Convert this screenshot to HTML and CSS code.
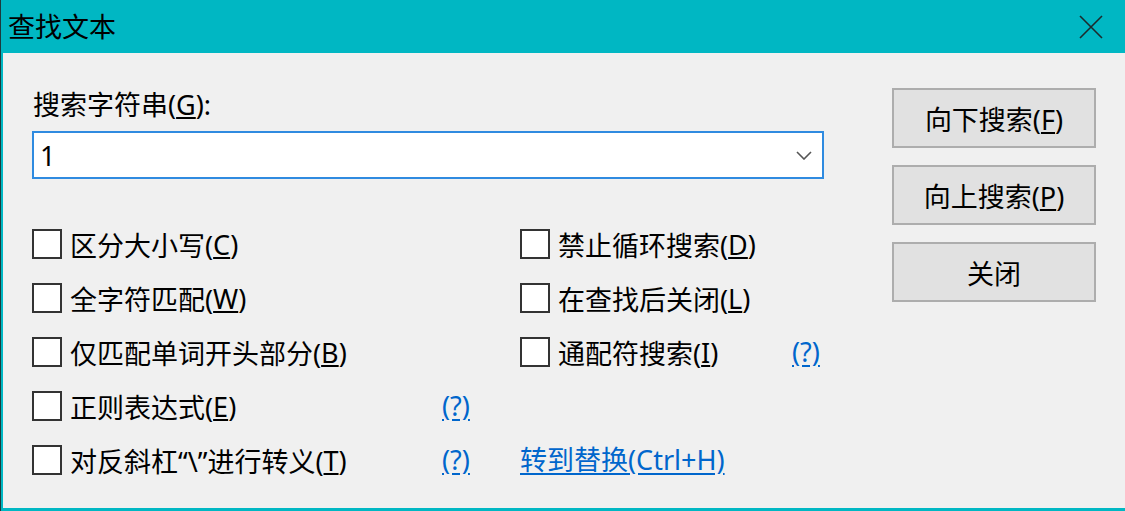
FILE: index.html
```html
<!DOCTYPE html>
<html lang="zh-CN">
<head>
  <meta charset="UTF-8" />
  <title>查找文本</title>
  <link rel="stylesheet" href="styles.css">
</head>
<body>
  <div class="window">
    <div class="titlebar">
      <span class="title">查找文本</span>
      <button class="close" aria-label="关闭">
        <svg width="24" height="24" viewBox="0 0 24 24"><path d="M1 1L23 23M23 1L1 23" stroke="#1c2a2c" stroke-width="1.6" fill="none"/></svg>
      </button>
    </div>

    <div class="content">
      <div class="main">
        <label class="field-label" for="pattern">搜索字符串(<u>G</u>):</label>
        <div class="combo">
          <input id="pattern" value="1" autocomplete="off" />
          <svg class="chev" width="16" height="9" viewBox="0 0 16 9"><path d="M1 1L8 8L15 1" stroke="#555" stroke-width="1.6" fill="none"/></svg>
        </div>

        <div class="options">
          <label class="opt c1"><span class="box"></span>区分大小写(<u>C</u>)</label>
          <label class="opt c3"><span class="box"></span>禁止循环搜索(<u>D</u>)</label>

          <label class="opt c1"><span class="box"></span>全字符匹配(<u>W</u>)</label>
          <label class="opt c3"><span class="box"></span>在查找后关闭(<u>L</u>)</label>

          <label class="opt c1"><span class="box"></span>仅匹配单词开头部分(<u>B</u>)</label>
          <label class="opt c3"><span class="box"></span>通配符搜索(<u>I</u>)</label>
          <a class="link c4" href="#">(?)</a>

          <label class="opt c1"><span class="box"></span>正则表达式(<u>E</u>)</label>
          <a class="link c2" href="#">(?)</a>

          <label class="opt c1"><span class="box"></span>对反斜杠“\”进行转义(<u>T</u>)</label>
          <a class="link c2" href="#">(?)</a>
          <a class="link c34" href="#">转到替换(Ctrl+H)</a>
        </div>
      </div>

      <div class="actions">
        <button class="btn">向下搜索(<u>F</u>)</button>
        <button class="btn">向上搜索(<u>P</u>)</button>
        <button class="btn">关闭</button>
      </div>
    </div>
  </div>
</body>
</html>
```

FILE: styles.css
```css
body {
  margin: 0;
  background: #1d3a3d;
  font-family: "Noto Sans", "Noto Sans CJK SC", sans-serif;
  font-size: 27px;
  color: #000;
}
.window {
  margin-left: 1px;
  width: 1124px;
  height: 511px;
  box-sizing: border-box;
  border-left: 2px solid #00b7c3;
  border-bottom: 3px solid #00b7c3;
  background: #f0f0f0;
  display: flex;
  flex-direction: column;
}
.titlebar {
  height: 53px;
  background: #00b7c3;
  display: flex;
  align-items: center;
  justify-content: space-between;
  padding-left: 5px;
}
.title {
  font-size: 27px;
  line-height: 1;
}
.close {
  background: none;
  border: none;
  padding: 0;
  width: 24px;
  height: 24px;
  margin-right: 22px;
  display: flex;
}
.content {
  display: flex;
  padding: 35px 0 0 29px;
}
.main {
  width: 792px;
  display: flex;
  flex-direction: column;
}
.field-label {
  height: 34px;
  line-height: 34px;
  margin-bottom: 9px;
  padding-left: 1px;
}
.combo {
  height: 48px;
  box-sizing: border-box;
  border: 2px solid #2f8be0;
  background: #fff;
  display: flex;
  align-items: center;
  padding: 0 10px 0 6px;
}
.combo input {
  flex: 1;
  border: none;
  outline: none;
  font: inherit;
  padding: 0;
  background: transparent;
}
.options {
  margin-top: 50px;
  display: grid;
  grid-template-columns: 410px 78px 272px auto;
  grid-auto-rows: 30px;
  row-gap: 24px;
}
.opt {
  display: flex;
  align-items: center;
  white-space: nowrap;
}
.box {
  width: 30px;
  height: 30px;
  box-sizing: border-box;
  border: 2px solid #333;
  background: #fff;
  margin-right: 8px;
  flex: none;
}
.link {
  color: #0066cc;
  text-decoration: underline;
  text-underline-offset: 3px;
  line-height: 30px;
  white-space: nowrap;
}
.c1 { grid-column: 1; }
.c2 { grid-column: 2; }
.c3 { grid-column: 3; }
.c4 { grid-column: 4; }
.c34 { grid-column: 3 / span 2; }
.actions {
  margin-left: 68px;
  display: flex;
  flex-direction: column;
  gap: 17px;
}
.btn {
  width: 204px;
  height: 60px;
  box-sizing: border-box;
  border: 2px solid #adadad;
  background: #e1e1e1;
  font: inherit;
  color: #000;
  padding: 0;
}
```
